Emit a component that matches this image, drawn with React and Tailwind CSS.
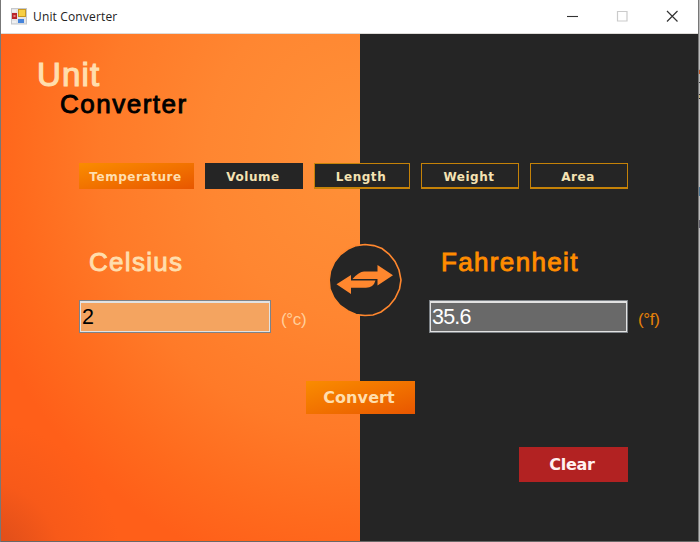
import React from "react";

const HEADING = "font-['Liberation_Sans',Arial,sans-serif] whitespace-nowrap";
const BUTTON = "font-['DejaVu_Sans',Verdana,sans-serif] font-bold whitespace-nowrap flex items-center justify-center";

function TitleBar() {
  return (
    <header className="flex h-[34px] items-center border-b border-[#dedbd8] bg-white pl-2.5">
      <svg width="16" height="17" viewBox="0 0 16 17" className="shrink-0">
        <rect x=".5" y=".5" width="15" height="15.5" fill="#e4e5e8" stroke="#c5c8cc" />
        <rect x="7.5" y="1.5" width="7" height="7" fill="#f7cf45" stroke="#c79822" />
        <rect x="1" y="5" width="5" height="6" fill="#b9262d" />
        <rect x="2.5" y="7" width="2" height="2" fill="#e5837d" />
        <rect x="7" y="11" width="6" height="4" fill="#4584dc" />
        <path d="M1 3h4M1 14h4" stroke="#fafafa" />
      </svg>
      <span className="ml-[6px] font-['Open_Sans','Noto_Sans',sans-serif] text-[12px] leading-4 tracking-[0.15px] text-[#222]">Unit Converter</span>
      <svg width="120" height="14" viewBox="0 0 120 14" fill="none" className="mr-[15px] ml-auto">
        <path d="M4 6.500h11" stroke="#333" strokeWidth="1.1" />
        <path d="M54.500 1.500h9.500v9.500h-9.500z" stroke="#cbcbcb" strokeWidth="1.2" />
        <path d="M104 1l10.500 10.500M114.500 1l-10.500 10.500" stroke="#333" strokeWidth="1.2" />
      </svg>
    </header>
  );
}

function Tab({ label, variant = "outlined", width = "w-[98px]" }) {
  const look = {
    active: "bg-linear-to-br from-[#fa8c00] to-[#e85600] text-[#ffdead] pt-px",
    solid: "bg-[#252525] text-[#f5e3b3] pt-px",
    outlined: "border border-b-2 border-[#c58208] bg-[#252525] text-[#f5e3b3] pt-[2px]",
  }[variant];
  return <button className={`${BUTTON} ${look} ${width} h-[26px] pr-[2px] text-[12px] tracking-[0.55px]`}>{label}</button>;
}

function Field({ value, unit, box, unitColor }) {
  return (
    <div className="flex h-[33px]">
      <div className={`${box} border border-[#7d8287]`}>
        <div className="flex h-full items-center border border-t-2 border-[#e2e2e2] pl-px font-['Liberation_Sans',Arial,sans-serif] text-[21.5px] leading-none tracking-[-0.8px]">
          <span className="mt-px">{value}</span>
        </div>
      </div>
      <span className={`${HEADING} ${unitColor} ml-2.5 pt-[10px] text-[17px] leading-5 tracking-[-0.35px]`}>{unit}</span>
    </div>
  );
}

function SwapIcon() {
  return (
    <svg width="74" height="74" viewBox="0 0 74 74" className="shrink-0">
      <path d="M37 1.500L46 2.600L54 5.500L61 11L67 18.500L71 27L73 37L71.500 46L67 55.500L61 63L53 69L45 72L37 72.500L28 71.600L20 68L12 62.500L6 55L2 46L1.200 37L2.500 28L6.500 19L12.500 11.500L20 6L28 2.600Z" fill="#252525" stroke="#ff872e" strokeWidth="1.6" />
      <path d="M8.500 41.200L23 32V37.500H47.500Q45.500 44.700 38 44.700H23V51Z" fill="#ff872e" />
      <path d="M24.500 36Q31 28.400 36 28.400H49.500V22L65 32.200L49.500 42.500V36Z" fill="#ff872e" />
    </svg>
  );
}

export default function App() {
  return (
    <div className="flex h-[542px] w-[700px] overflow-hidden border-l border-[#777]">
      <div className="flex w-[697px] flex-col">
        <TitleBar />
        <main className="h-[507px] bg-[linear-gradient(to_right,transparent_359px,#252525_359px),radial-gradient(circle_at_-20px_527px,#dc4c1b_0px,#e04e1ae0_35px,#f0541980_80px,#ff5f1900_140px),radial-gradient(ellipse_400px_430px_at_359px_120px,#ff9138_0%,#ff8631_38%,#ff7a28_65%,#ff6a1d_86%,#ff5f19_100%)]">
          <h1 className={`${HEADING} h-[129px] pt-[23px] pl-[36px]`}>
            <span className="block text-[33px] leading-9 tracking-[1.2px] text-[#ffdead] [-webkit-text-stroke:1.2px_#ffdead]">Unit</span>
            <span className="-mt-[3px] ml-[23px] block text-[26px] leading-7 tracking-[1.5px] text-black [-webkit-text-stroke:0.9px_#000]">Converter</span>
          </h1>
          <nav className="flex pl-[78px]">
            <Tab label="Temperature" variant="active" width="w-[115px] mr-[11px]" />
            <Tab label="Volume" variant="solid" width="w-[98px] mr-[11px]" />
            <Tab label="Length" width="w-[96px] mr-[11px]" />
            <Tab label="Weight" width="w-[98px] mr-[11px]" />
            <Tab label="Area" />
          </nav>
          <section className="mt-[54px] flex h-[90px] pl-[78px]">
            <div className="flex w-[249px] flex-col justify-between">
              <h2 className={`${HEADING} pt-[5px] pl-[10px] text-[26px] leading-7 tracking-[1.3px] text-[#ffdead] [-webkit-text-stroke:0.9px_#ffdead]`}>Celsius</h2>
              <Field value="2" unit="(°c)" box="w-[192px] bg-[#f4a460] text-black" unitColor="text-[#ffcf9b]" />
            </div>
            <SwapIcon />
            <div className="ml-[27px] flex flex-col justify-between">
              <h2 className={`${HEADING} pt-[5px] pl-[12px] text-[26px] leading-7 tracking-[1.35px] text-[#ff8c00] [-webkit-text-stroke:0.9px_#ff8c00]`}>Fahrenheit</h2>
              <Field value="35.6" unit="(°f)" box="w-[199px] bg-[#696969] text-white" unitColor="text-[#e58108]" />
            </div>
          </section>
          <div className="mt-[48px] pl-[305px]">
            <button className={`${BUTTON} h-[33px] w-[109px] bg-linear-to-br from-[#fa8c00] to-[#e85600] pt-px pr-[3px] text-[16px] tracking-[0.1px] text-[#ffdead]`}>Convert</button>
          </div>
          <div className="mt-[33px] pl-[518px]">
            <button className={`${BUTTON} h-[35px] w-[109px] bg-[#b22222] pt-px pr-[3px] text-[16px] tracking-[-0.25px] text-[#fff0f0]`}>Clear</button>
          </div>
        </main>
        <div className="h-px bg-[#686868]" />
      </div>
      <div className="flex flex-1 flex-col border-l border-[#777] bg-[#bbb]">
        <div className="h-[70px] border-b border-[#aaa]" />
        <div className="h-1 bg-[#c45724]" />
        <div className="h-[9px] border-b border-[#444]" />
        <div className="h-[12px] border-b border-[#333]" />
        <div className="h-[3px] bg-[#c9b788]" />
        <div className="h-px bg-[#222]" />
        <div className="mt-[88px] h-[9px] bg-[#4e7795]" />
        <div className="mt-[24px] h-[8px] bg-[#62606a]" />
      </div>
    </div>
  );
}
